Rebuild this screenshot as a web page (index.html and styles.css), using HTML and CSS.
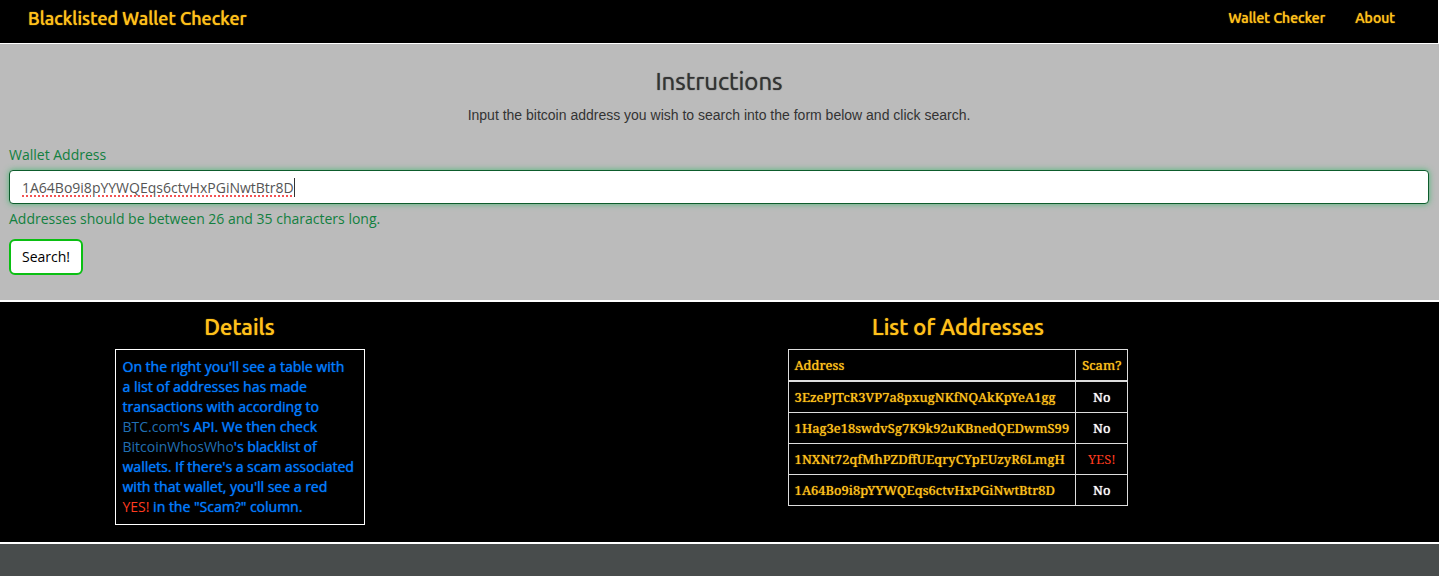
FILE: index.html
```html
<!DOCTYPE html>
<html lang="en">
<head>
<meta charset="utf-8">
<title>Blacklisted Wallet Checker</title>
<link rel="stylesheet" href="styles.css">
</head>
<body>
<header class="navbar">
  <a class="brand" href="#">Blacklisted Wallet Checker</a>
  <nav class="nav-links">
    <a href="#">Wallet Checker</a>
    <a href="#">About</a>
  </nav>
</header>
<main>
  <section class="search">
    <h1 class="title">Instructions</h1>
    <p class="intro">Input the bitcoin address you wish to search into the form below and click search.</p>
    <form class="form">
      <label class="label" for="wallet">Wallet Address</label>
      <div class="field">
        <input class="input" id="wallet" type="text" spellcheck="false" value="1A64Bo9i8pYYWQEqs6ctvHxPGiNwtBtr8D" aria-describedby="wallet-help">
        <span class="caret"></span>
      </div>
      <p class="help" id="wallet-help">Addresses should be between 26 and 35 characters long.</p>
      <button class="button" type="button">Search!</button>
    </form>
  </section>
  <section class="results">
    <div class="column">
      <h2 class="heading">Details</h2>
      <p class="details">On the right you'll see a table with a list of addresses has made transactions with according to <a href="#">BTC.com</a>'s API. We then check <a href="#">BitcoinWhosWho</a>'s blacklist of wallets. If there's a scam associated with that wallet, you'll see a red <span class="danger">YES!</span> in the "Scam?" column.</p>
    </div>
    <div class="column">
      <h2 class="heading">List of Addresses</h2>
      <table class="addresses">
        <thead>
          <tr><th>Address</th><th>Scam?</th></tr>
        </thead>
        <tbody>
          <tr><td>3EzePJTcR3VP7a8pxugNKfNQAkKpYeA1gg</td><td class="answer">No</td></tr>
          <tr><td>1Hag3e18swdvSg7K9k92uKBnedQEDwmS99</td><td class="answer">No</td></tr>
          <tr><td>1NXNt72qfMhPZDffUEqryCYpEUzyR6LmgH</td><td class="answer danger">YES!</td></tr>
          <tr><td>1A64Bo9i8pYYWQEqs6ctvHxPGiNwtBtr8D</td><td class="answer">No</td></tr>
        </tbody>
      </table>
    </div>
  </section>
</main>
</body>
</html>
```
FILE: styles.css
```css
* { box-sizing: border-box; }
body {
  margin: 0;
  background: #484c4c;
  font: 14px/20px "Open Sans", sans-serif;
}
h1, h2, p { margin: 0; }
a { text-decoration: none; }
.navbar {
  display: flex;
  justify-content: space-between;
  padding: 6px 43px 13px 28px;
  border-right: 1px solid #fff;
  border-bottom: 1px solid #fff;
  background: #000;
  font: 500 14px/24px Ubuntu, "Noto Sans", sans-serif;
}
.navbar a { color: #ffc11a; text-shadow: 0 0 1px #ffc11a; }
.navbar .brand { font-size: 18px; }
.nav-links { display: flex; gap: 30px; }
.search {
  padding: 24px 10px 25px 9px;
  border-bottom: 2px solid #fff;
  background: #bbb;
}
.title {
  color: #333;
  font: 400 24px/28px Ubuntu, "Noto Sans", sans-serif;
  text-align: center;
  text-shadow: 0 0 1px #333;
}
.intro {
  margin-top: 9px;
  color: #333;
  font: 14px/20px "Liberation Sans", sans-serif;
  text-align: center;
}
.form { margin-top: 20px; }
.label { display: block; color: #128040; }
.field { position: relative; margin-top: 5px; }
.input {
  display: block;
  width: 100%;
  height: 34px;
  padding: 6px 12px;
  border: 1px solid #0d5c2c;
  border-radius: 4px;
  outline: 0;
  background: #fff;
  box-shadow: 0 0 6px #4fb878;
  color: #555;
  font: inherit;
  text-decoration: underline dotted #f45353 2px;
  text-underline-offset: 3px;
}
.caret {
  position: absolute;
  top: 8px;
  left: 285px;
  width: 1px;
  height: 19px;
  background: #333;
}
.help { margin-top: 5px; color: #128040; }
.button {
  display: block;
  margin-top: 10px;
  padding: 6px 11px;
  border: 2px solid #0abf12;
  border-radius: 6px;
  background: #fff;
  color: #000;
  font: inherit;
}
.results {
  display: grid;
  grid-template-columns: 1fr 2fr;
  padding: 12px 2px 17px 0;
  border-bottom: 2px solid #fff;
  background: #000;
}
.column { display: flex; flex-direction: column; align-items: center; }
.heading {
  margin-bottom: 9px;
  color: #ffc11a;
  font: 500 22px/26px Ubuntu, "Noto Sans", sans-serif;
  text-shadow: 0 0 1px #ffc11a;
}
.details {
  width: 250px;
  padding: 7px 9px 7px 7px;
  border: 1px solid #fff;
  color: #007bff;
  text-shadow: 0 0 1px #007bff;
}
.details a,
.details .danger { text-shadow: none; }
.details a { color: #2070b4; }
.addresses {
  border-collapse: collapse;
  color: #ffc11a;
  font: 400 13px/20px "Droid Serif", "Noto Serif", "DejaVu Serif Condensed", "DejaVu Serif", serif;
  text-shadow: 0 0 1px currentColor;
}
.addresses th,
.addresses td {
  padding: 5px 6px;
  border: 1px solid #ddd;
  font-weight: 400;
  text-align: left;
}
.addresses th { border-bottom-width: 2px; }
.addresses .answer { color: #fff; text-align: center; text-shadow: 0 0 1px #fff; }
.danger,
.addresses .danger { color: #ff3b1f; text-shadow: none; }
```
